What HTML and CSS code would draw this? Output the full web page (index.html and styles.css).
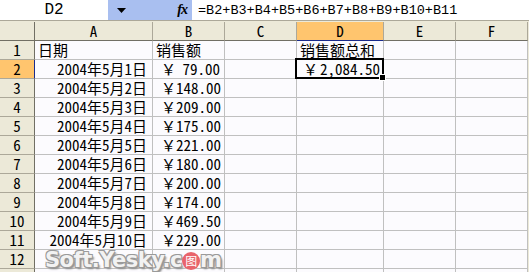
FILE: index.html
```html
<!DOCTYPE html>
<html lang="zh-CN">
<head>
    <meta charset="UTF-8">
    <title>销售额总和</title>
    <link rel="stylesheet" href="styles.css">
</head>
<body>
    <div class="formula-bar">
        <div class="name-box">D2</div>
        <div class="bar-tools">
            <svg class="drop" width="9" height="5" viewBox="0 0 9 5"><path d="M0 0h9L4.5 5z" fill="#000"/></svg>
            <span class="fx">fx</span>
        </div>
        <div class="formula">=B2+B3+B4+B5+B6+B7+B8+B9+B10+B11</div>
    </div>

    <div class="sheet">
        <div class="row head">
            <div class="corner"></div>
            <div class="col">A</div>
            <div class="col">B</div>
            <div class="col">C</div>
            <div class="col active">D</div>
            <div class="col">E</div>
            <div class="col">F</div>
        </div>
        <div class="row">
            <div class="rh">1</div>
            <div class="cell text">日期</div>
            <div class="cell text">销售额</div>
            <div class="cell"></div>
            <div class="cell text">销售额总和</div>
            <div class="cell"></div>
            <div class="cell"></div>
        </div>
        <div class="row">
            <div class="rh active">2</div>
            <div class="cell date">2004年5月1日</div>
            <div class="cell money"><span>￥</span><span>79.00</span></div>
            <div class="cell"></div>
            <div class="cell money sel"><span>￥</span><span>2,084.50</span></div>
            <div class="cell"></div>
            <div class="cell"></div>
        </div>
        <div class="row">
            <div class="rh">3</div>
            <div class="cell date">2004年5月2日</div>
            <div class="cell money"><span>￥</span><span>148.00</span></div>
            <div class="cell"></div><div class="cell"></div><div class="cell"></div><div class="cell"></div>
        </div>
        <div class="row">
            <div class="rh">4</div>
            <div class="cell date">2004年5月3日</div>
            <div class="cell money"><span>￥</span><span>209.00</span></div>
            <div class="cell"></div><div class="cell"></div><div class="cell"></div><div class="cell"></div>
        </div>
        <div class="row">
            <div class="rh">5</div>
            <div class="cell date">2004年5月4日</div>
            <div class="cell money"><span>￥</span><span>175.00</span></div>
            <div class="cell"></div><div class="cell"></div><div class="cell"></div><div class="cell"></div>
        </div>
        <div class="row">
            <div class="rh">6</div>
            <div class="cell date">2004年5月5日</div>
            <div class="cell money"><span>￥</span><span>221.00</span></div>
            <div class="cell"></div><div class="cell"></div><div class="cell"></div><div class="cell"></div>
        </div>
        <div class="row">
            <div class="rh">7</div>
            <div class="cell date">2004年5月6日</div>
            <div class="cell money"><span>￥</span><span>180.00</span></div>
            <div class="cell"></div><div class="cell"></div><div class="cell"></div><div class="cell"></div>
        </div>
        <div class="row">
            <div class="rh">8</div>
            <div class="cell date">2004年5月7日</div>
            <div class="cell money"><span>￥</span><span>200.00</span></div>
            <div class="cell"></div><div class="cell"></div><div class="cell"></div><div class="cell"></div>
        </div>
        <div class="row">
            <div class="rh">9</div>
            <div class="cell date">2004年5月8日</div>
            <div class="cell money"><span>￥</span><span>174.00</span></div>
            <div class="cell"></div><div class="cell"></div><div class="cell"></div><div class="cell"></div>
        </div>
        <div class="row">
            <div class="rh">10</div>
            <div class="cell date">2004年5月9日</div>
            <div class="cell money"><span>￥</span><span>469.50</span></div>
            <div class="cell"></div><div class="cell"></div><div class="cell"></div><div class="cell"></div>
        </div>
        <div class="row">
            <div class="rh">11</div>
            <div class="cell date">2004年5月10日</div>
            <div class="cell money"><span>￥</span><span>229.00</span></div>
            <div class="cell"></div><div class="cell"></div><div class="cell"></div><div class="cell"></div>
        </div>
        <div class="row">
            <div class="rh">12</div>
            <div class="cell"></div><div class="cell"></div><div class="cell"></div>
            <div class="cell"></div><div class="cell"></div><div class="cell"></div>
        </div>
        <div class="row">
            <div class="rh"></div>
            <div class="cell"></div><div class="cell"></div><div class="cell"></div>
            <div class="cell"></div><div class="cell"></div><div class="cell"></div>
        </div>

        <!-- site watermark -->
        <div class="watermark">Soft.Yesky.c<span class="seal">图</span>m</div>
    </div>
</body>
</html>
```

FILE: styles.css
```css
body {
    margin: 0;
    background: #ece9d8;
    font-family: "Noto Sans Mono CJK SC", "Liberation Mono", "Noto Sans CJK SC", monospace;
    font-size: 15px;
    color: #000;
    overflow: hidden;
}

/* formula bar */
.formula-bar {
    display: flex;
    height: 20px;
    border-bottom: 1px solid #aca899;
    margin-bottom: 1px;
    font-family: "Liberation Mono", monospace;
}
.name-box {
    width: 108px;
    background: #fff;
    display: flex;
    align-items: center;
    justify-content: center;
    font-size: 16px;
}
.bar-tools {
    width: 84px;
    background: #a9bff0;
    display: flex;
    align-items: center;
    justify-content: space-between;
    padding: 0 5px 0 9px;
    box-sizing: border-box;
}
.fx {
    font-family: "Liberation Serif", serif;
    font-style: italic;
    font-weight: bold;
    font-size: 14px;
    letter-spacing: -1px;
}
.formula {
    flex: 1;
    background: #fff;
    display: flex;
    align-items: center;
    padding-left: 6px;
    font-size: 13.5px;
    white-space: nowrap;
}

/* grid */
.sheet {
    position: relative;
}
.row {
    display: grid;
    grid-template-columns: 35px 118px 72px 72px 87px 72px 72px;
    height: 19px;
}
.row > div {
    box-sizing: border-box;
    border-right: 1px solid #c0c0c0;
    border-bottom: 1px solid #c0c0c0;
    line-height: 18px;
    white-space: nowrap;
}
.head > div {
    background: #ece9d8;
    border-right-color: #aca899;
    border-bottom-color: #716f64;
    text-align: center;
}
.head .corner {
    border-right-color: #716f64;
}
.rh {
    background: #ece9d8;
    text-align: center;
    border-right: 1px solid #716f64 !important;
    border-bottom-color: #aca899 !important;
}
.head .active {
    background: #ffc56e;
    border-bottom: 1px solid #1a2b8c;
}
.rh.active {
    background: #ffc56e;
    border-right: 1px solid #1a2b8c !important;
}
.cell {
    background: #fcfbfe;
    overflow: visible;
}
.text {
    padding-left: 3px;
}
.date {
    text-align: right;
    padding-right: 5px;
}
.money {
    display: flex;
    justify-content: space-between;
    padding: 0 4px 0 8px;
}

/* active cell */
.sel {
    position: relative;
    padding: 0 3px 0 6px;
}
.sel::after {
    content: "";
    position: absolute;
    left: -2px;
    top: -2px;
    right: -1px;
    bottom: -1px;
    border: 2px solid #000;
}
.sel::before {
    content: "";
    position: absolute;
    right: -3px;
    bottom: -3px;
    width: 5px;
    height: 5px;
    background: #000;
    border: 1px solid #fff;
    z-index: 1;
}

.watermark {
    position: absolute;
    left: 45px;
    top: 226px;
    font-family: "DejaVu Sans", sans-serif;
    font-weight: bold;
    font-size: 21px;
    color: #f2f2f2;
    letter-spacing: -0.5px;
    text-shadow: -1px -1px 0 #9a9a9a, 1px -1px 0 #9a9a9a, -1px 1px 0 #9a9a9a, 1px 1px 0 #9a9a9a, 2px 2px 2px #888;
}
.seal {
    display: inline-block;
    width: 18px;
    height: 18px;
    border-radius: 50%;
    background: #e8646c;
    color: #fff;
    font-family: "Noto Sans CJK SC", sans-serif;
    font-size: 12px;
    font-weight: normal;
    line-height: 18px;
    text-align: center;
    text-shadow: none;
    vertical-align: 1px;
}
```
